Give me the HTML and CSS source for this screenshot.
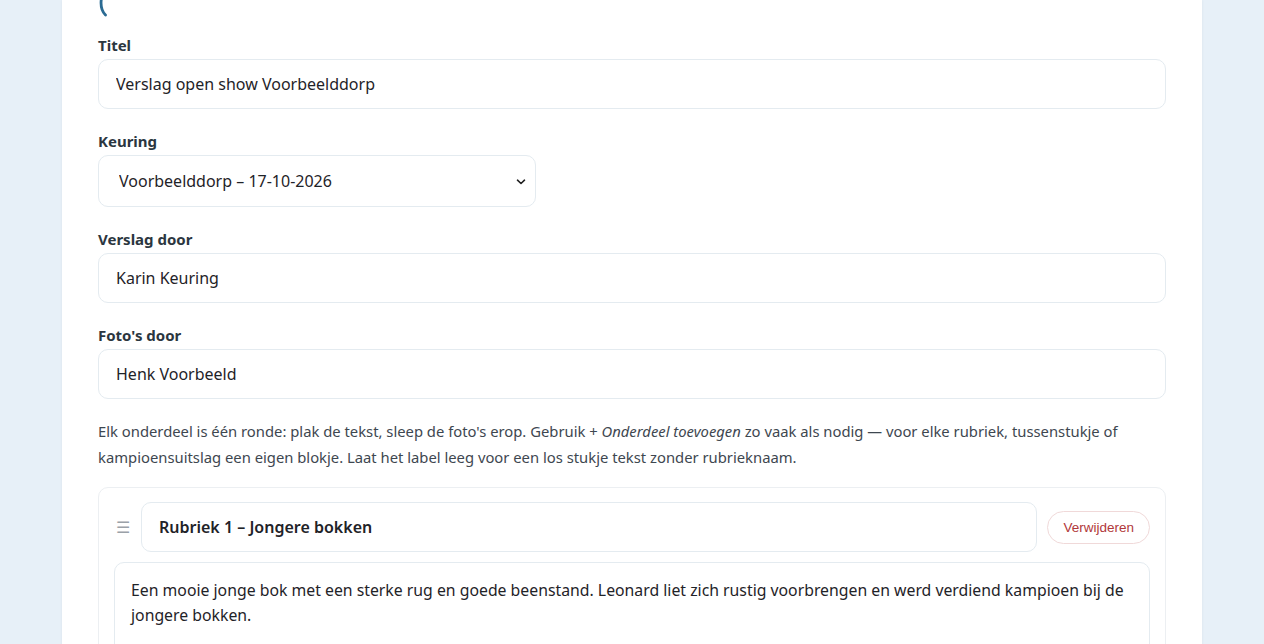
FILE: index.html
```html
<!DOCTYPE html>
<html lang="nl">
<head>
  <meta charset="UTF-8">
  <meta name="viewport" content="width=device-width, initial-scale=1.0">
  <title>Verslag bewerken</title>
  <link rel="stylesheet" href="styles.css">
</head>
<body>
  <div class="page">
    <div class="card">
      <div class="card-top">
        <svg width="12" height="18" viewBox="0 0 12 18"><path d="M3.2 0 C2.6 6 3.2 11 7.5 15" fill="none" stroke="#2b6b93" stroke-width="2.8" stroke-linecap="round"/></svg>
      </div>

      <div class="field">
        <label>Titel</label>
        <input type="text" value="Verslag open show Voorbeelddorp">
      </div>

      <div class="field">
        <label>Keuring</label>
        <div class="select-wrap">
          <select>
            <option>Voorbeelddorp – 17-10-2026</option>
          </select>
          <svg class="chev" width="10" height="6" viewBox="0 0 10 6"><path d="M1.5 1.2 L5 4.5 L8.5 1.2" fill="none" stroke="#222" stroke-width="1.6" stroke-linecap="round" stroke-linejoin="round"/></svg>
        </div>
      </div>

      <div class="field">
        <label>Verslag door</label>
        <input type="text" value="Karin Keuring">
      </div>

      <div class="field">
        <label>Foto's door</label>
        <input type="text" value="Henk Voorbeeld">
      </div>

      <p class="hint">Elk onderdeel is één ronde: plak de tekst, sleep de foto's erop. Gebruik + <em>Onderdeel toevoegen</em> zo vaak als nodig — voor elke rubriek, tussenstukje of kampioensuitslag een eigen blokje. Laat het label leeg voor een los stukje tekst zonder rubrieknaam.</p>

      <div class="section">
        <div class="section-head">
          <span class="handle">☰</span>
          <input type="text" class="section-label" value="Rubriek 1 – Jongere bokken">
          <button class="btn-remove">Verwijderen</button>
        </div>
        <div class="section-text">Een mooie jonge bok met een sterke rug en goede beenstand. Leonard liet zich rustig voorbrengen en werd verdiend kampioen bij de jongere bokken.</div>
      </div>
    </div>
  </div>
</body>
</html>
```

FILE: styles.css
```css
body {
  margin: 0;
  background: #e7f0f8;
  font-family: "Noto Sans", "Open Sans", sans-serif;
  color: #1f2328;
}
.page {
  padding: 0 62px;
}
.card {
  background: #fff;
  padding: 0 36px 40px;
  min-height: 700px;
  box-shadow: 0 0 3px rgba(0,0,0,0.06);
}
.card-top {
  height: 35px;
}
.field {
  margin-bottom: 22px;
}
label {
  display: block;
  font-weight: bold;
  font-size: 15px;
  color: #2b3640;
  line-height: 20px;
  margin-bottom: 4px;
}
input,
select {
  box-sizing: border-box;
  width: 100%;
  height: 50px;
  padding: 0 17px;
  font-family: inherit;
  font-size: 16px;
  color: #1f2328;
  background: #fff;
  border: 1px solid #e4ebf0;
  border-radius: 10px;
  outline: none;
}
.select-wrap {
  position: relative;
  width: 438px;
}
select {
  height: 52px;
  padding-left: 20px;
  appearance: none;
}
.chev {
  position: absolute;
  right: 10px;
  top: 24px;
}
.hint {
  margin: -3px 0 17px;
  font-size: 14.8px;
  line-height: 26px;
  color: #3e4750;
}
.section {
  border: 1px solid #eceff2;
  border-radius: 10px;
  padding: 14px 15px 16px 15px;
}
.section-head {
  display: flex;
  align-items: center;
  gap: 10px;
}
.handle {
  width: 17px;
  color: #9aa1a8;
  font-size: 16px;
  text-align: center;
}
.section-label {
  flex: 1;
  font-weight: 600;
}
.btn-remove {
  height: 33px;
  padding: 0 15px;
  border: 1px solid #f0d9d9;
  border-radius: 17px;
  background: #fff;
  color: #b1383a;
  font-family: "Liberation Sans", Arial, sans-serif;
  font-size: 13.5px;
  cursor: pointer;
}
.section-text {
  margin-top: 10px;
  border: 1px solid #e4ebf0;
  border-radius: 10px;
  padding: 15px 16px 13px;
  font-size: 15.8px;
  line-height: 25px;
  min-height: 80px;
}
```
